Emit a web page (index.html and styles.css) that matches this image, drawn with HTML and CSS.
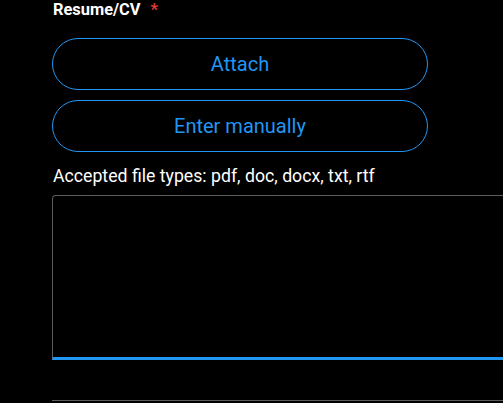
FILE: index.html
```html
<!DOCTYPE html>
<html lang="en">
<head>
  <meta charset="UTF-8">
  <title>Resume/CV</title>
  <meta name="viewport" content="width=device-width, initial-scale=1">
  <link rel="stylesheet" href="styles.css">
</head>
<body>

  <div class="field">
    <label class="field-label">Resume/CV <span class="required">*</span></label>

    <div class="actions">
      <button class="pill-btn">Attach</button>
      <button class="pill-btn">Enter manually</button>
    </div>

    <p class="hint">Accepted file types: pdf, doc, docx, txt, rtf</p>

    <div class="text-box"></div>
    <div class="next-field"></div>
  </div>

</body>
</html>
```

FILE: styles.css
```css
* { box-sizing: border-box; }

body {
  font-family: Roboto, 'Liberation Sans', sans-serif;
  background: #000;
  color: #fff;
  margin: 0;
  overflow: hidden;
}

.field {
  padding-left: 52px;
}

.field-label {
  display: block;
  font-size: 16.4px;
  font-weight: bold;
  line-height: 20px;
  margin-bottom: 18px;
  padding-left: 1px;
}

.required {
  color: #e53935;
  margin-left: 6px;
}

.actions {
  display: flex;
  flex-direction: column;
  gap: 10px;
  width: 376px;
}

.pill-btn {
  font-family: inherit;
  font-size: 20px;
  height: 52px;
  background: transparent;
  color: #2196f3;
  border: 1px solid #2196f3;
  border-radius: 26px;
  cursor: pointer;
}

.hint {
  font-size: 17.7px;
  margin: 14px 0 9px;
  padding-left: 1px;
}

.text-box {
  width: 480px;
  height: 165px;
  border: 1px solid #5c5c5c;
  border-bottom: 3px solid #2196f3;
  border-radius: 4px 4px 0 0;
}

.next-field {
  width: 480px;
  margin-top: 40px;
  border-top: 1px solid #5c5c5c;
}
```
